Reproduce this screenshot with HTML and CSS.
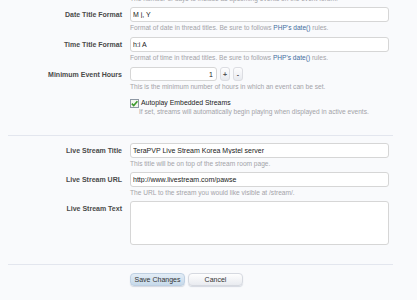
FILE: index.html
```html
<!DOCTYPE html>
<html lang="en">
<head>
  <meta charset="UTF-8" />
  <title>Event Options</title>
  <link rel="stylesheet" href="styles.css">
</head>
<body>
  <form class="options">
    <p class="explain explain-cut">The number of days to include as upcoming events on the event forum.</p>

    <div class="row">
      <label class="label">Date Title Format</label>
      <div class="control">
        <input class="text" type="text" value="M j, Y">
        <p class="explain">Format of date in thread titles. Be sure to follows <a href="#">PHP's date()</a> rules.</p>
      </div>
    </div>

    <div class="row">
      <label class="label">Time Title Format</label>
      <div class="control">
        <input class="text" type="text" value="h:i A">
        <p class="explain">Format of time in thread titles. Be sure to follows <a href="#">PHP's date()</a> rules.</p>
      </div>
    </div>

    <div class="row">
      <label class="label">Minimum Event Hours</label>
      <div class="control">
        <div class="spin">
          <input class="text number" type="text" value="1">
          <button type="button" class="spin-btn">+</button>
          <button type="button" class="spin-btn">-</button>
        </div>
        <p class="explain">This is the minimum number of hours in which an event can be set.</p>
      </div>
    </div>

    <div class="row">
      <span></span>
      <div class="control">
        <div class="check">
          <span class="box">
            <svg width="9" height="9" viewBox="0 0 9 9"><path d="M1.8 4.6 L3.7 6.6 L7.4 2.2" fill="none" stroke="#3c9a2c" stroke-width="1.6"/></svg>
          </span>
          <span>Autoplay Embedded Streams</span>
        </div>
        <p class="explain hint">If set, streams will automatically begin playing when displayed in active events.</p>
      </div>
    </div>

    <hr class="divider top-gap">

    <div class="row tight">
      <label class="label">Live Stream Title</label>
      <div class="control">
        <input class="text" type="text" value="TeraPVP Live Stream Korea Mystel server">
        <p class="explain">This title will be on top of the stream room page.</p>
      </div>
    </div>

    <div class="row tight">
      <label class="label">Live Stream URL</label>
      <div class="control">
        <input class="text" type="text" value="http://www.livestream.com/pawse">
        <p class="explain">The URL to the stream you would like visible at /stream/.</p>
      </div>
    </div>

    <div class="row">
      <label class="label">Live Stream Text</label>
      <div class="control">
        <textarea class="textarea"></textarea>
      </div>
    </div>

    <hr class="divider bottom-gap">

    <div class="row">
      <span></span>
      <div class="buttons">
        <button type="button" class="button primary">Save Changes</button>
        <button type="button" class="button">Cancel</button>
      </div>
    </div>
  </form>
</body>
</html>
```

FILE: styles.css
```css
body {
  margin: 0;
  background-color: #f9fafc;
  font-family: 'Liberation Sans', Arial, sans-serif;
  color: #333;
  overflow: hidden;
}

.options {
  padding: 0 12px 0 7px;
}

.row {
  display: grid;
  grid-template-columns: 115px 259px;
  column-gap: 8px;
  margin-bottom: 5px;
}

.row.tight {
  margin-bottom: 4px;
}

.label {
  font-size: 7px;
  font-weight: bold;
  line-height: 15px;
  text-align: right;
  color: #4a4a4a;
}

.control {
  display: flex;
  flex-direction: column;
}

.text {
  box-sizing: border-box;
  width: 259px;
  height: 15px;
  margin: 0;
  padding: 0 2px;
  border: 1px solid #d6d6d6;
  border-radius: 3px;
  background: #fff;
  font-family: 'Liberation Sans', Arial, sans-serif;
  font-size: 7px;
  color: #222;
}

.explain {
  margin: 2px 0 0;
  font-size: 6.6px;
  line-height: 8px;
  color: #a3a3a8;
}

.explain a {
  color: #3f6c9c;
  text-decoration: none;
}

.explain-cut {
  margin: -5px 0 4px 123px;
}

.spin {
  display: flex;
  align-items: center;
  gap: 3px;
}

.number {
  width: 87px;
  height: 14px;
  text-align: right;
  padding-right: 3px;
}

.spin-btn {
  width: 10px;
  height: 14px;
  padding: 0;
  border: 1px solid #dcdde2;
  border-radius: 3px;
  background: linear-gradient(#fdfdfe, #e8eaef);
  font-family: 'Liberation Sans', Arial, sans-serif;
  font-size: 7px;
  font-weight: bold;
  color: #555;
}

.check {
  display: flex;
  align-items: center;
  gap: 2px;
  margin-top: 2px;
  font-size: 6.9px;
  line-height: 10px;
  color: #222;
}

.box {
  box-sizing: border-box;
  width: 9px;
  height: 9px;
  border: 1px solid #8e98a4;
  background: #f3f6f0;
  display: flex;
}

.box svg {
  margin: -1px;
}

.hint {
  margin-top: 0;
  padding-left: 9px;
}

.divider {
  border: 0;
  border-top: 1px solid #e3e6ee;
  margin: 0 12px 0 1px;
}

.top-gap {
  margin-top: 19px;
  margin-bottom: 7px;
}

.bottom-gap {
  margin-top: 19px;
  margin-bottom: 8px;
}

.textarea {
  box-sizing: border-box;
  width: 259px;
  height: 44px;
  margin: 0;
  border: 1px solid #d6d6d6;
  border-radius: 3px;
  background: #fff;
  resize: none;
}

.buttons {
  display: flex;
  gap: 3px;
}

.button {
  width: 55px;
  height: 13px;
  padding: 0;
  border: 1px solid #d6d9e0;
  border-radius: 4px;
  background: linear-gradient(#fefefe, #e9ebf0);
  box-shadow: 0 1px 1px #d4d8e0;
  font-family: 'Liberation Sans', Arial, sans-serif;
  font-size: 7px;
  color: #333;
}

.primary {
  background: linear-gradient(#e3edf6, #c6d9ea);
  border-color: #bfd0e2;
}
```
